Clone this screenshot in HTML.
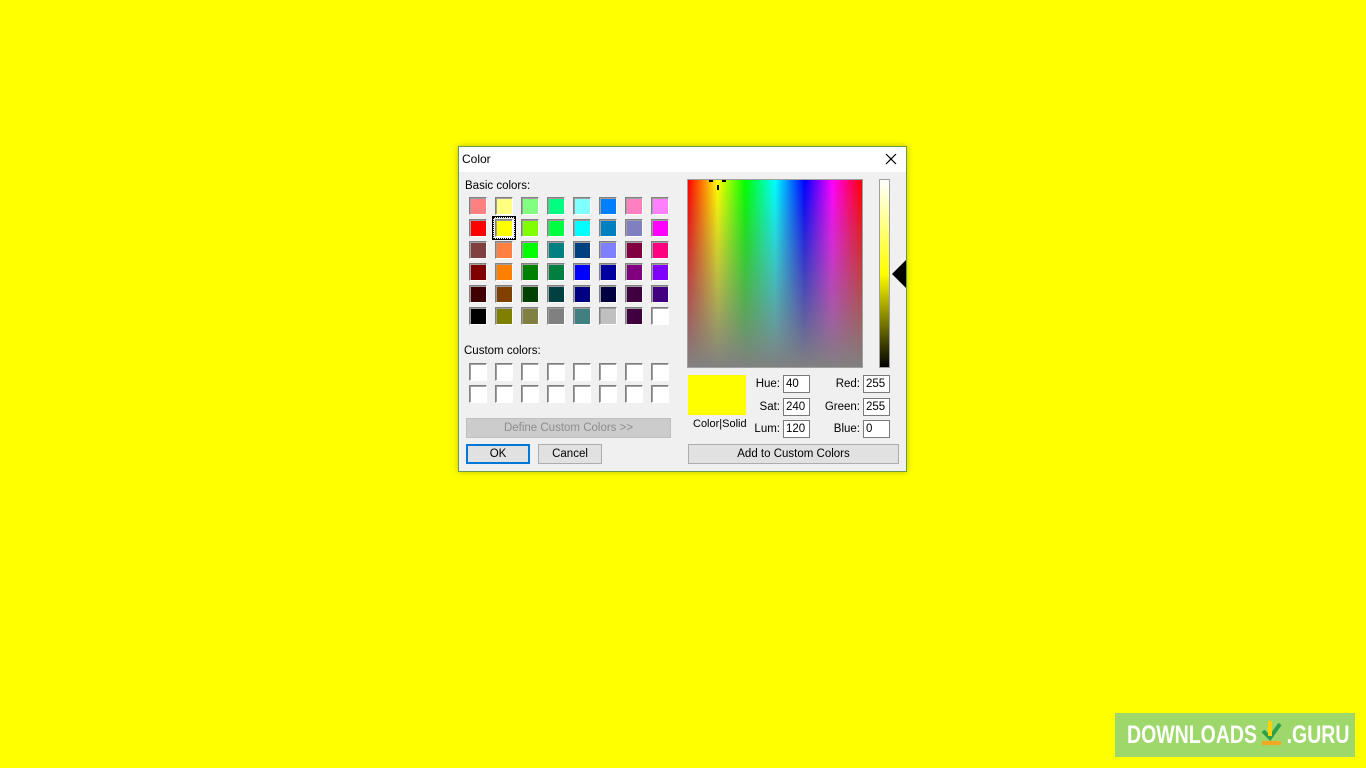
<!DOCTYPE html><html><head><style>
body{margin:0;width:1366px;height:768px;background:#ffff00;position:relative;overflow:hidden;font-family:"Liberation Sans",sans-serif;font-size:11.5px;color:#000}
.a{position:absolute}
.dlg{left:458px;top:146px;width:447px;height:324px;background:#f0f0f0;border:1px solid #6b9a4a;box-shadow:0 0 6px rgba(0,0,0,.25)}
.tb{left:0;top:0;width:447px;height:25px;background:#fff}
.sw{position:absolute;width:16px;height:16px;border:1px solid;border-color:#808080 #fff #fff #808080;box-shadow:inset 1px 1px 0 #a0a0a0}
.in{position:absolute;background:#fff;border:1px solid #7a7a7a;height:18px;font-size:11.5px;line-height:16px;padding-left:2px;box-sizing:border-box}
.btn{position:absolute;background:#e1e1e1;border:1px solid #adadad;box-sizing:border-box;text-align:center;font-size:11.5px}
.lb{position:absolute;font-size:11.5px;text-align:right}
</style></head><body>
<div class="a dlg">
<div class="a tb"></div>
<div class="a" style="left:3px;top:5px;font-size:12px">Color</div>
<svg class="a" style="left:426px;top:6px" width="12" height="12"><path d="M1 1L11 11M11 1L1 11" stroke="#000" stroke-width="1.2"/></svg>
<div class="a" style="left:6px;top:33px">Basic colors:</div>
<div class="a" style="left:5px;top:198px">Custom colors:</div>
<div class="btn" style="left:7px;top:271px;width:205px;height:20px;line-height:18px;color:#8d8d8d;background:#cccccc;border-color:#bfbfbf">Define Custom Colors &gt;&gt;</div>
<div class="btn" style="left:7px;top:297px;width:64px;height:20px;border:2px solid #0078d7;line-height:16px">OK</div>
<div class="btn" style="left:79px;top:297px;width:64px;height:20px;line-height:18px">Cancel</div>
<div class="a" style="left:228px;top:32px;width:176px;height:189px;background:linear-gradient(to bottom,rgba(128,128,128,0),#808080),linear-gradient(to right,#f00,#ff0 17%,#0f0 33%,#0ff 50%,#00f 67%,#f0f 83%,#f00);border:1px solid #a0a0a0;box-sizing:border-box"></div>
<div class="a" style="left:250px;top:33px;width:4px;height:2px;background:#000"></div><div class="a" style="left:263px;top:33px;width:4px;height:2px;background:#000"></div><div class="a" style="left:258px;top:38px;width:2px;height:5px;background:#000"></div>
<div class="a" style="left:420px;top:32px;width:11px;height:189px;background:linear-gradient(#fff,#ff0 50%,#000);border:1px solid #a0a0a0;box-sizing:border-box"></div>
<svg class="a" style="left:433px;top:113px" width="15" height="28"><path d="M14 0L0 14L14 28Z" fill="#000"/></svg>
<div class="a" style="left:229px;top:228px;width:58px;height:40px;background:#ff0"></div>
<div class="a" style="left:234px;top:271px;font-size:11px">Color|Solid</div>
<div class="lb" style="left:288px;top:231px;width:33px">Hue:</div><div class="in" style="left:324px;top:228px;width:27px">40</div>
<div class="lb" style="left:288px;top:254px;width:33px">Sat:</div><div class="in" style="left:324px;top:251px;width:27px">240</div>
<div class="lb" style="left:288px;top:276px;width:33px">Lum:</div><div class="in" style="left:324px;top:273px;width:27px">120</div>
<div class="lb" style="left:355px;top:231px;width:46px">Red:</div><div class="in" style="left:404px;top:228px;width:27px">255</div>
<div class="lb" style="left:355px;top:254px;width:46px">Green:</div><div class="in" style="left:404px;top:251px;width:27px">255</div>
<div class="lb" style="left:355px;top:276px;width:46px">Blue:</div><div class="in" style="left:404px;top:273px;width:27px">0</div>
<div class="btn" style="left:229px;top:297px;width:211px;height:20px;line-height:18px">Add to Custom Colors</div>
</div>
<div class="a" style="left:1115px;top:713px;width:240px;height:44px;background:#9ed86a"></div>
<div class="a" style="left:1127px;top:721px;font-size:25px;font-weight:bold;color:#fff;transform:scaleX(.78);transform-origin:left;white-space:nowrap">DOWNLOADS<span style="display:inline-block;width:38px"></span>.GURU</div>
<svg class="a" style="left:1260px;top:719px" width="24" height="28"><path d="M3 12L10 19L20 5" stroke="#2fa04a" stroke-width="4" fill="none"/><path d="M10 2V17" stroke="#ffd200" stroke-width="4"/><rect x="2" y="22" width="19" height="4" fill="#f5a623"/></svg>
<script>
var c=[["#FF8080","#FFFF80","#80FF80","#00FF80","#80FFFF","#0080FF","#FF80C0","#FF80FF"],["#FF0000","#FFFF00","#80FF00","#00FF40","#00FFFF","#0080C0","#8080C0","#FF00FF"],["#804040","#FF8040","#00FF00","#008080","#004080","#8080FF","#800040","#FF0080"],["#800000","#FF8000","#008000","#008040","#0000FF","#0000A0","#800080","#8000FF"],["#400000","#804000","#004000","#004040","#000080","#000040","#400040","#400080"],["#000000","#808000","#808040","#808080","#408080","#C0C0C0","#400040","#FFFFFF"]];
var h="";var d=document.querySelector('.dlg');
for(var r=0;r<8;r++)for(var k=0;k<8;k++){var col=r<6?c[r][k]:"#fff";var y=r<6?50+r*22:216+(r-6)*22;h+='<div class="sw" style="left:'+(10+k*26)+'px;top:'+y+'px;background:'+col+'"></div>';}
h+='<div class="a" style="left:34px;top:70px;width:20px;height:20px;border:1px dotted #000;outline:1px solid #000"></div>';
d.insertAdjacentHTML('beforeend',h);
</script>
</body></html>
